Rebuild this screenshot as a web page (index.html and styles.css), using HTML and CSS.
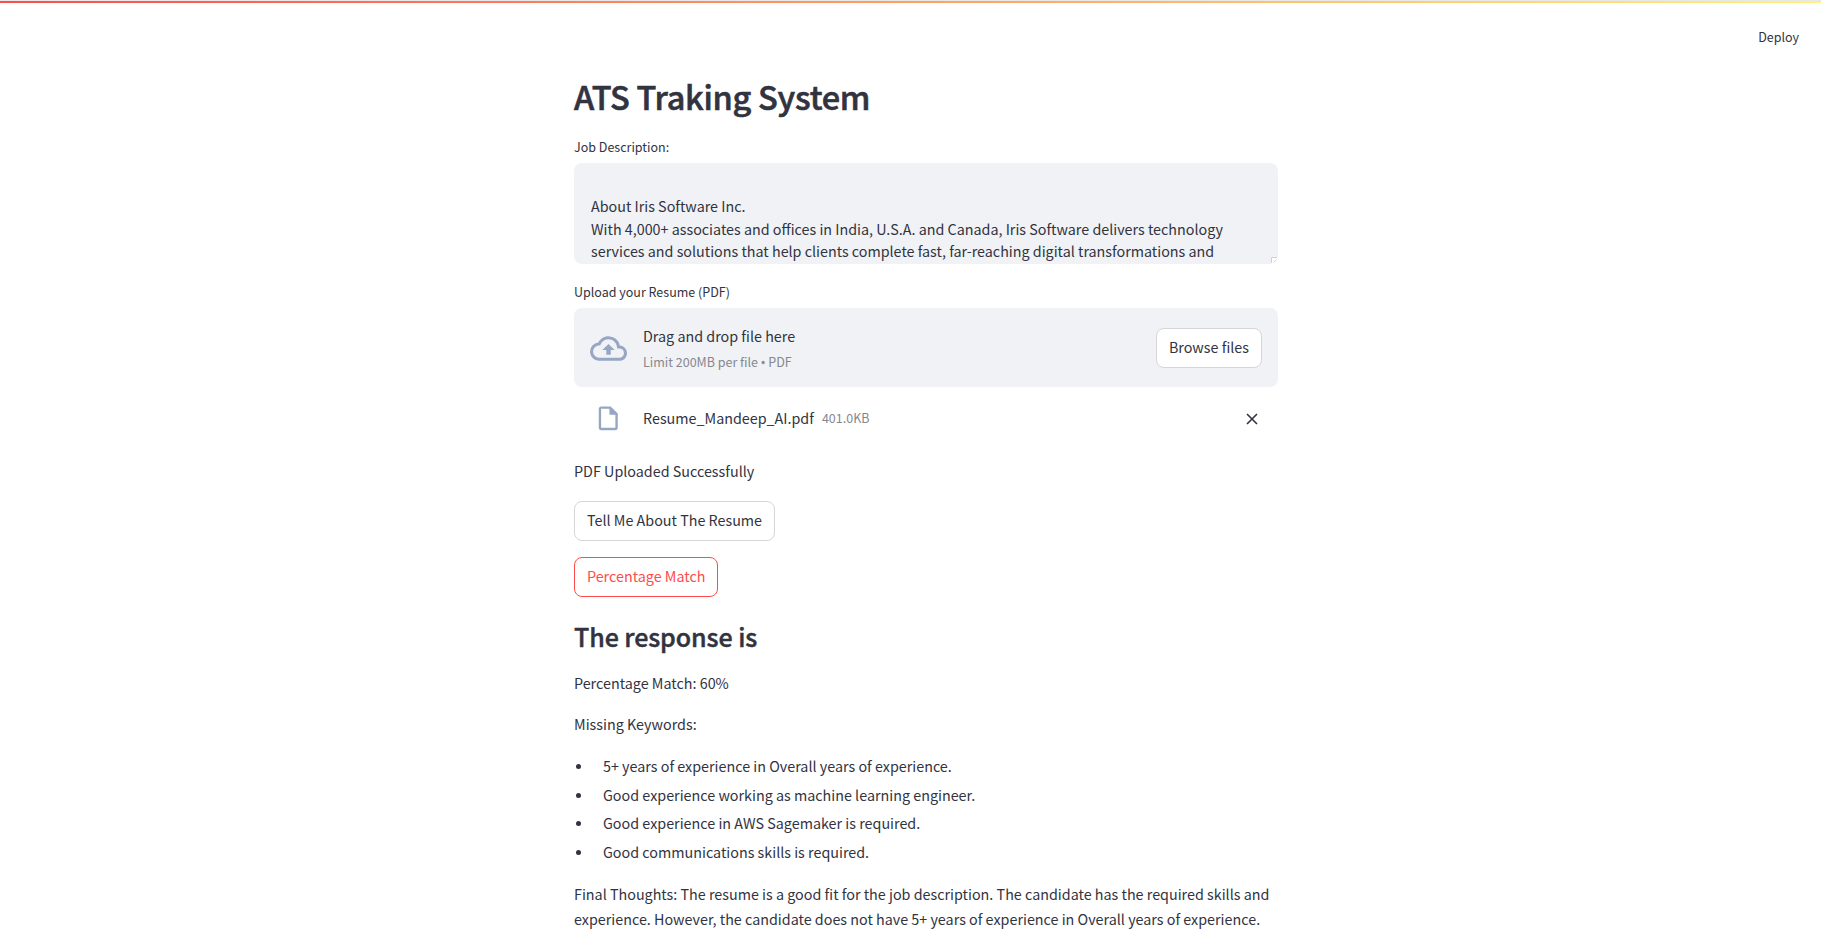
FILE: index.html
```html
<!DOCTYPE html>
<html lang="en">
<head>
<meta charset="utf-8">
<title>ATS Traking System</title>
<link rel="stylesheet" href="styles.css">
</head>
<body>
<div class="decoration"></div>
<header class="toolbar"><span class="deploy">Deploy</span></header>
<main class="column">
  <h1 class="title">ATS Traking System</h1>
  <label class="label" for="jd">Job Description:</label>
  <div class="textarea-wrap">
  <textarea class="textarea" id="jd" spellcheck="false">

About Iris Software Inc.
With 4,000+ associates and offices in India, U.S.A. and Canada, Iris Software delivers technology
services and solutions that help clients complete fast, far-reaching digital transformations and</textarea>
  <svg class="grip" viewBox="0 0 7 7"><path fill="#fff" d="M0 0h7v3l-4 4H0z"/><path fill="none" stroke="#d0d1d5" d="M.5 6V.5H6M2.5 5.5l3-3"/></svg>
  </div>
  <div class="label label-upload">Upload your Resume (PDF)</div>
  <section class="dropzone">
    <svg class="cloud" viewBox="0 0 24 24"><path d="M19.35 10.04A7.49 7.49 0 0012 4C9.11 4 6.6 5.64 5.35 8.04A5.994 5.994 0 000 14c0 3.31 2.69 6 6 6h13c2.76 0 5-2.24 5-5 0-2.64-2.05-4.78-4.65-4.96zM19 18H6c-2.21 0-4-1.79-4-4 0-2.05 1.53-3.76 3.56-3.97l1.07-.11.5-.95A5.469 5.469 0 0112 6c2.62 0 4.88 1.86 5.39 4.43l.3 1.5 1.53.11A2.98 2.98 0 0122 15c0 1.65-1.35 3-3 3zM8 13h2.55v3h2.9v-3H16l-4-4z"/></svg>
    <div class="drop-text">
      <span class="drop-main">Drag and drop file here</span>
      <span class="small">Limit 200MB per file <span class="dot">•</span> PDF</span>
    </div>
    <button class="button">Browse files</button>
  </section>
  <div class="file-row">
    <svg class="file-icon" viewBox="0 0 24 24"><path d="M14 2H6c-1.1 0-1.99.9-1.99 2L4 20c0 1.1.89 2 1.99 2H18c1.1 0 2-.9 2-2V8l-6-6zM6 20V4h7v5h5v11H6z"/></svg>
    <span class="file-name">Resume_Mandeep_AI.pdf</span>
    <span class="small file-size">401.0KB</span>
    <svg class="close" viewBox="0 0 12 12"><path d="M1 1l10 10M11 1L1 11"/></svg>
  </div>
  <p class="text">PDF Uploaded Successfully</p>
  <button class="button first">Tell Me About The Resume</button>
  <button class="button active">Percentage Match</button>
  <h2 class="subtitle">The response is</h2>
  <p class="text">Percentage Match: 60%</p>
  <p class="text para">Missing Keywords:</p>
  <ul class="list">
    <li>5+ years of experience in Overall years of experience.</li>
    <li>Good experience working as machine learning engineer.</li>
    <li>Good experience in AWS Sagemaker is required.</li>
    <li>Good communications skills is required.</li>
  </ul>
  <p class="text final">Final Thoughts: The resume is a good fit for the job description. The candidate has the required skills and<br>experience. However, the candidate does not have 5+ years of experience in Overall years of experience.</p>
</main>
</body>
</html>
```
FILE: styles.css
```css
* { box-sizing: border-box; }
body {
  margin: 0;
  height: 931px;
  overflow: hidden;
  background: #fff;
  color: #31333f;
  font: 14.33px/25.6px "Noto Sans CJK SC", "Open Sans", sans-serif;
}
h1, h2, p, ul { margin: 0; padding: 0; }
.decoration { height: 3px; border-top: 1px solid #e8e8ea; background: linear-gradient(90deg, #ff4b4b, #fff27a) padding-box; }
.toolbar { display: flex; justify-content: flex-end; height: 66px; padding: 22px 22px 0 0; }
.deploy { font-size: 12.5px; line-height: 24px; }
.column { display: flex; flex-direction: column; align-items: flex-start; width: 704px; margin-left: 574px; white-space: nowrap; }
.title { height: 65px; font-size: 32.5px; line-height: 54px; font-weight: 500; letter-spacing: -0.27px; -webkit-text-stroke: 0.6px #31333f; }
.label { height: 29px; font-size: 12.5px; line-height: 26px; }
.textarea-wrap { position: relative; height: 101px; }
.textarea {
  display: block; width: 704px; height: 101px; padding: 10px 17px 0; border: 0; border-radius: 8px;
  background: #f0f2f6; color: #31333f; font: 14.32px/22.4px "Noto Sans CJK SC", sans-serif;
  overflow: hidden; resize: none; outline: 0; white-space: pre;
}
.grip { position: absolute; right: 0; bottom: 0; width: 7px; height: 7px; }
.label-upload { height: 28px; margin-top: 16px; line-height: 24px; }
.dropzone { display: flex; align-items: center; width: 704px; height: 79px; padding: 0 16px; border-radius: 8px; background: #f0f2f6; }
.cloud { width: 37px; height: 37px; margin: 1px 16px 0 0; fill: #97a6c3; }
.drop-text { display: flex; flex-direction: column; flex: 1; padding-top: 2px; }
.small { font-size: 12.5px; color: #87888f; }
.dot { font-family: "Open Sans", sans-serif; line-height: 1; -webkit-text-stroke: 0.4px #87888f; }
.button {
  height: 40px; padding: 0 12px 2px; border: 1px solid #d6d6d9; border-radius: 8px;
  background: #fff; color: inherit; font: inherit; line-height: 24px;
}
.file-row { display: flex; align-items: center; width: 704px; height: 63px; margin-bottom: 8px; padding: 0 20px 0 20px; }
.file-icon { width: 28.5px; height: 28.5px; fill: #97a6c3; margin-right: 20.5px; }
.file-name { padding-bottom: 2px; }
.file-size { margin-left: 8px; padding-bottom: 2px; flex: 1; }
.close { width: 12px; height: 12px; fill: none; stroke: #31333f; stroke-width: 1.6; }
.first { margin: 17px 0 16px; }
.active { border-color: #ff4b4b; color: #ff4b4b; }
.subtitle { margin: 18px 0 13px; font-size: 25px; line-height: 42px; font-weight: 500; letter-spacing: -0.08px; -webkit-text-stroke: 0.45px #31333f; }
.para { margin-top: 16px; }
.list { list-style: none; margin: 16.4px 0 13.4px; }
.list li { position: relative; margin-bottom: 3px; padding-left: 29px; }
.list li::before { content: ""; position: absolute; left: 2px; top: 11px; width: 5px; height: 5px; border-radius: 50%; background: #31333f; }
.final { line-height: 25.2px; }
```
